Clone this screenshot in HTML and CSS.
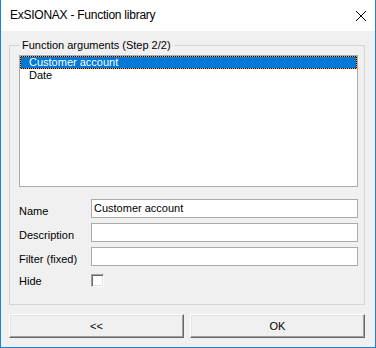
FILE: index.html
```html
<!DOCTYPE html>
<html lang="en">
<head>
<meta charset="utf-8">
<title>ExSIONAX - Function library</title>
<link rel="stylesheet" href="styles.css">
</head>
<body>
<div class="window">
  <div class="titlebar">
    <span class="title">ExSIONAX - Function library</span>
    <svg class="close" width="10" height="10" viewBox="0 0 10 10" aria-label="Close">
      <path d="M0 0 L10 10 M10 0 L0 10" stroke="#000" stroke-width="1" fill="none"/>
    </svg>
  </div>
  <div class="content">
    <fieldset class="group">
      <legend class="legend">Function arguments (Step 2/2)</legend>
      <div class="listbox">
        <div class="item selected">Customer account</div>
        <div class="item">Date</div>
      </div>
      <div class="form">
        <label class="label">Name</label>
        <div class="input">Customer account</div>
        <label class="label">Description</label>
        <div class="input"></div>
        <label class="label">Filter (fixed)</label>
        <div class="input"></div>
        <label class="label label-check">Hide</label>
        <div class="check-cell"><span class="checkbox"></span></div>
      </div>
    </fieldset>
    <div class="buttons">
      <button class="btn">&lt;&lt;</button>
      <button class="btn">OK</button>
    </div>
  </div>
</div>
</body>
</html>
```

FILE: styles.css
```css
* { box-sizing: border-box; }
html, body {
  margin: 0;
  padding: 0;
  background: #f0f0f0;
}
body {
  width: 376px;
  height: 348px;
  font-family: "Liberation Sans", Arial, sans-serif;
  font-size: 11px;
  line-height: 13px;
  color: #000;
}
.window {
  width: 376px;
  height: 348px;
  border: 1px solid #1883d7;
  border-top: none;
  display: flex;
  flex-direction: column;
  background: #f0f0f0;
}
.titlebar {
  height: 31px;
  flex: none;
  background: #fff;
  display: flex;
  align-items: center;
  padding-left: 9px;
  padding-right: 9px;
}
.title {
  font-size: 12px;
  line-height: 31px;
  letter-spacing: -0.25px;
  flex: 1;
}
.close {
  display: block;
  flex: none;
}
.content {
  flex: 1;
  padding: 8px 10px 12px 8px;
  display: flex;
  flex-direction: column;
}
.group {
  margin: 0;
  border: 1px solid #d5d5d5;
  padding: 3px 6px 14px 9px;
  min-width: 0;
}
.legend {
  padding: 0 3px;
  line-height: 13px;
}
.listbox {
  height: 132px;
  border: 1px solid #ababab;
  background: #fff;
}
.item {
  height: 13px;
  padding-left: 9px;
  white-space: nowrap;
}
.selected {
  background: #0078d7;
  color: #fff;
  box-shadow: inset 0 0 0 1px #000;
  outline: 1px dotted #ff9a28;
  outline-offset: -1px;
}
.form {
  margin-top: 12px;
  display: grid;
  grid-template-columns: 72px 1fr;
  grid-auto-rows: 19px;
  row-gap: 5px;
}
.label {
  padding-top: 6px;
  white-space: nowrap;
}
.label-check {
  margin-top: 3px;
  padding-top: 1px;
}
.input {
  height: 19px;
  border: 1px solid #ababab;
  background: #fff;
  padding: 2px 2px;
  white-space: nowrap;
}
.check-cell {
  padding-top: 3px;
}
.checkbox {
  display: block;
  width: 13px;
  height: 13px;
  background: #fff;
  border: 1px solid;
  border-color: #a0a0a0 #fff #fff #a0a0a0;
  box-shadow: inset 1px 1px 0 #696969, inset -1px -1px 0 #e3e3e3;
}
.buttons {
  margin-top: 9px;
  display: grid;
  grid-template-columns: 1fr 1fr;
  column-gap: 6px;
}
.btn {
  height: 24px;
  margin: 0;
  padding: 0;
  font-family: "Liberation Sans", Arial, sans-serif;
  font-size: 11px;
  line-height: 13px;
  color: #000;
  background: #f0f0f0;
  border: 1px solid;
  border-color: #fff #696969 #696969 #fff;
  box-shadow: inset -1px -1px 0 #a0a0a0, inset 1px 1px 0 #e3e3e3;
  display: flex;
  align-items: center;
  justify-content: center;
}
```
